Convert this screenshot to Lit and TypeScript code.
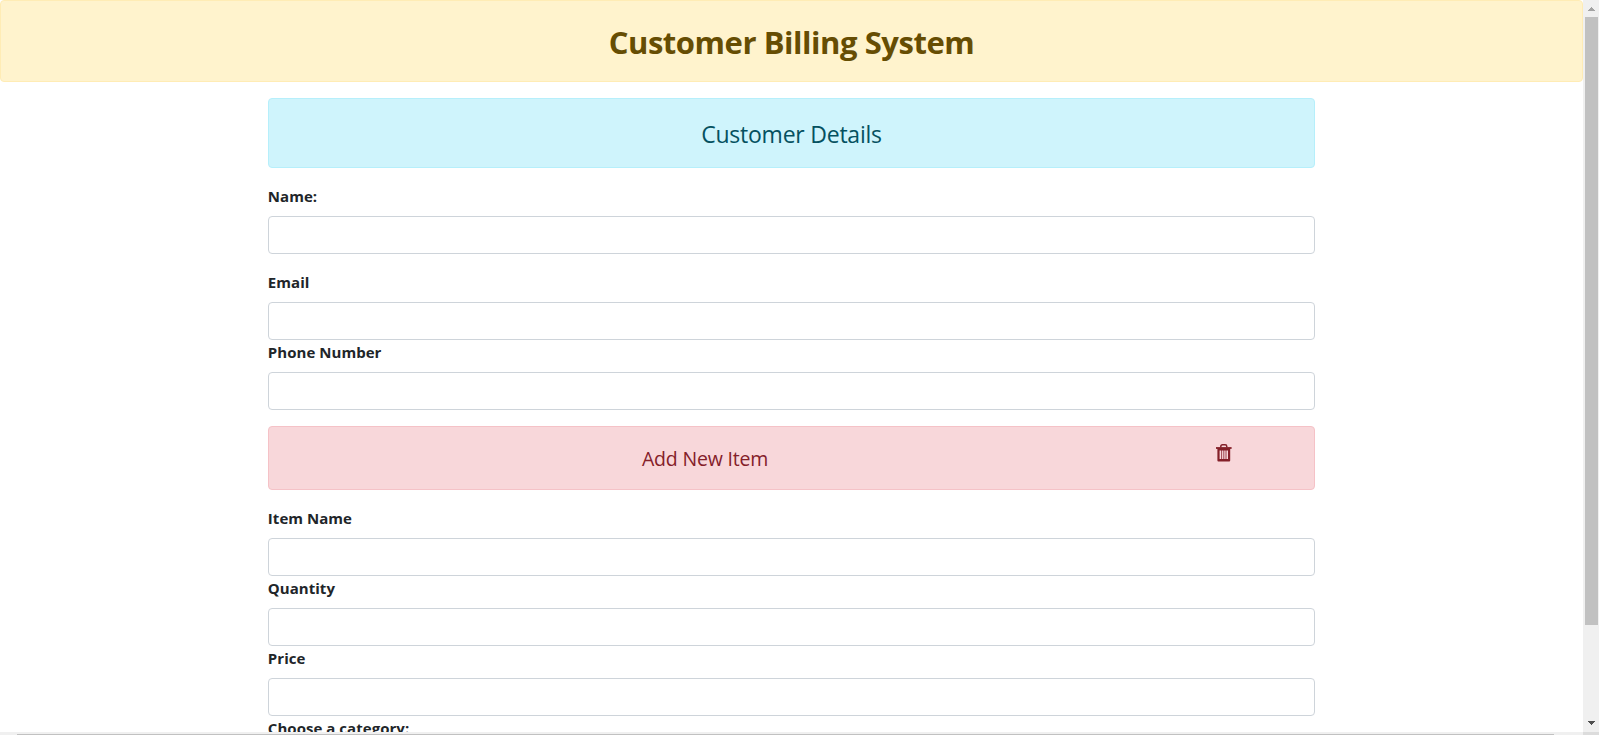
import { LitElement, html, css } from "lit";
import { customElement } from "lit/decorators.js";

@customElement("app-root")
export class AppRoot extends LitElement {
  static styles = css`
    :host {
      display: grid;
      grid-template-columns: 1583px 16px;
      grid-template-rows: 732px 3px;
      width: 1599px;
      height: 735px;
      overflow: hidden;
      background: #fff;
      color: #212529;
      font: 400 16px/24px "Open Sans", "Noto Sans", sans-serif;
    }
    * { box-sizing: border-box; }
    .page { overflow: hidden; }
    .alert {
      border: 1px solid;
      border-radius: 4px;
      padding: 17px 16px 15px;
      margin-bottom: 16px;
      text-align: center;
    }
    .warning { background: #fff3cd; border-color: #ffecb5; color: #664d03; }
    .info { background: #cff4fc; border-color: #b6effb; color: #055160; }
    .danger {
      background: #f8d7da;
      border-color: #f5c2c7;
      color: #842029;
      display: grid;
      grid-template-columns: 10fr 2fr;
      padding: 17px 4px 15px;
      margin-top: 16px;
    }
    .title { font-size: 31px; font-weight: 700; line-height: 48px; letter-spacing: -0.45px; }
    .lead { font-size: 23px; font-weight: 400; line-height: 36px; letter-spacing: -0.23px; }
    .sub { font-size: 19.5px; font-weight: 400; line-height: 30px; letter-spacing: -0.18px; }
    .column { width: 1047.33px; margin: 0 auto; }
    .field { display: block; }
    .spaced { margin-bottom: 16px; }
    .label { display: block; font-size: 15px; font-weight: 700; line-height: 24px; margin-bottom: 8px; letter-spacing: 0.04px; }
    .input {
      display: block;
      width: 100%;
      height: 38px;
      border: 1px solid #ced4da;
      border-radius: 4px;
      background: #fff;
      padding: 6px 12px;
      font: inherit;
    }
    .trash { display: block; width: 16px; height: 18px; margin: 0 auto; }
    .vbar {
      background: #f0f0f0;
      display: flex;
      flex-direction: column;
      align-items: center;
    }
    .arrow { display: block; width: 16px; height: 17px; }
    .thumb { width: 13px; height: 608px; background: #c1c1c1; margin-left: 1px; }
    .down { margin-top: auto; }
    .hbar { background: #f0f0f0; padding: 2px 29px 0 17px; }
    .hthumb { height: 1px; background: #c1c1c1; }
    .corner { background: #dcdcdc; }
  `;

  private field(label: string, spaced = false) {
    return html`<label class="field ${spaced ? "spaced" : ""}">
      <span class="label">${label}</span><input class="input" />
    </label>`;
  }

  render() {
    return html`
      <main class="page">
        <div class="alert warning"><div class="title"><span>Customer Billing System</span></div></div>
        <div class="column">
          <div class="alert info"><div class="lead"><span>Customer Details</span></div></div>
          ${this.field("Name:", true)} ${this.field("Email")} ${this.field("Phone Number")}
          <div class="alert danger">
            <div class="sub"><span>Add New Item</span></div>
            <svg class="trash" viewBox="0 0 16 18" fill="none" stroke="#842029">
              <path d="M4.8 3.5V2.5Q4.8 .8 6.5 .8H9.1Q10.8 .8 10.8 2.5V3.5" stroke-width="1.5" />
              <path d="M0 4H15.6" stroke-width="1.8" />
              <path d="M1.4 4H14.2V16.4Q14.2 17.4 13.2 17.4H2.4Q1.4 17.4 1.4 16.4ZM3.6 6.4V15H12V6.4Z" fill="#842029" fill-rule="evenodd" stroke="none" />
              <path d="M5.6 6V15.2M7.8 6V15.2M10 6V15.2" stroke-width=".8" />
            </svg>
          </div>
          ${this.field("Item Name")} ${this.field("Quantity")} ${this.field("Price")}
          ${this.field("Choose a category:")}
        </div>
      </main>
      <div class="vbar">
        <svg class="arrow" viewBox="0 0 16 17" shape-rendering="crispEdges"><path d="M8 7H9V8H10V9H11V10H12V11H5V10H6V9H7V8H8Z" fill="#a3a3a3" /></svg>
        <div class="thumb"></div>
        <svg class="arrow down" viewBox="0 0 16 17" shape-rendering="crispEdges"><path d="M5 6H12V7H11V8H10V9H9V10H8V9H7V8H6V7H5Z" fill="#505050" /></svg>
      </div>
      <div class="hbar"><div class="hthumb"></div></div>
      <div class="corner"></div>
    `;
  }
}
